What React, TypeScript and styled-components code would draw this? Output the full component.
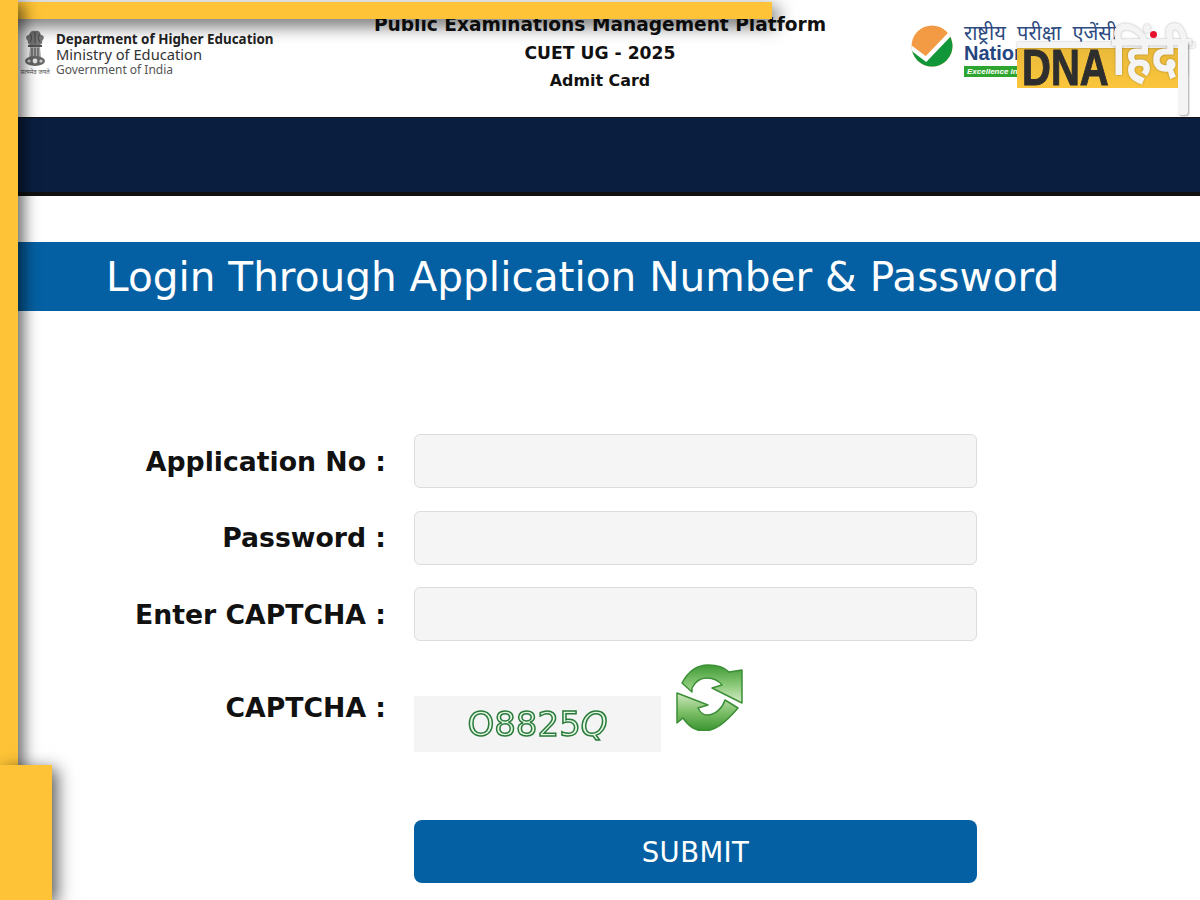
import React from 'react';
import styled, { createGlobalStyle } from 'styled-components';

const GlobalStyle = createGlobalStyle`
  html, body {
    margin: 0;
    padding: 0;
    background: #fff;
  }
  body {
    font-family: "DejaVu Sans", sans-serif;
    overflow: hidden;
  }
`;

const Page = styled.div`
  position: relative;
  width: 1200px;
  height: 900px;
  overflow: hidden;
  background: #fff;
`;

const Header = styled.header`
  display: grid;
  grid-template-columns: 1fr auto 1fr;
  height: 117px;
  color: #111;
`;

const Ministry = styled.div`
  display: flex;
  align-items: flex-start;
  gap: 6px;
  padding: 30px 0 0 20px;
`;

const EmblemBlock = styled.div`
  display: flex;
  flex-direction: column;
  align-items: center;
  width: 30px;
`;

const Motto = styled.span`
  font-family: "Noto Sans", sans-serif;
  font-size: 6px;
  line-height: 8px;
  color: #555;
  white-space: nowrap;
`;

const MinistryText = styled.div`
  display: flex;
  flex-direction: column;
  margin-top: 2px;
  font-family: "Noto Sans", "Open Sans", sans-serif;
`;

const MinistryLine = styled.span<{ $size: number; $bold?: boolean; $color: string }>`
  font-size: ${(p) => p.$size}px;
  font-weight: ${(p) => (p.$bold ? 700 : 400)};
  color: ${(p) => p.$color};
  line-height: 15px;
  white-space: nowrap;
`;

const TitleBlock = styled.div`
  display: flex;
  flex-direction: column;
  align-items: center;
  padding-top: 11px;
`;

const TitleLine = styled.div<{ $size: number }>`
  font-size: ${(p) => p.$size}px;
  font-weight: 700;
  line-height: 28px;
  white-space: nowrap;
  color: #111;
`;

const NtaBlock = styled.div`
  display: flex;
  justify-content: flex-end;
  padding-top: 25px;
`;

const NtaInner = styled.div`
  display: flex;
  gap: 11px;
  width: 289px;
  height: 60px;
`;

const NtaText = styled.div`
  display: flex;
  flex-direction: column;
`;

const NtaHindi = styled.span`
  font-family: "Noto Sans", sans-serif;
  font-size: 20px;
  line-height: 15px;
  color: #2c4a80;
  word-spacing: 6px;
  white-space: nowrap;
`;

const NtaName = styled.span`
  font-family: "Liberation Sans", sans-serif;
  font-weight: 700;
  font-size: 20px;
  line-height: 26px;
  color: #24457f;
`;

const NtaBadge = styled.span`
  font-family: "Liberation Sans", sans-serif;
  font-style: italic;
  font-weight: 700;
  font-size: 8px;
  line-height: 11px;
  height: 11px;
  width: 80px;
  padding-left: 3px;
  color: #fff;
  background: #2ea52f;
`;

const NavBar = styled.div`
  height: 74px;
  background: #0a1f40;
  border-top: 1px solid #111;
  border-bottom: 4px solid #111;
`;

const Banner = styled.h1`
  display: flex;
  align-items: center;
  height: 69px;
  margin: 46px 0 0;
  padding-left: 106px;
  background: #0560a3;
  color: #fff;
  font-size: 40.6px;
  font-weight: 400;
  white-space: nowrap;
`;

const Form = styled.form`
  display: grid;
  grid-template-columns: 386px 563px;
  column-gap: 28px;
  row-gap: 22.5px;
  padding-top: 123px;
`;

const Label = styled.label`
  justify-self: end;
  align-self: center;
  font-size: 26.7px;
  font-weight: 700;
  color: #111;
  white-space: nowrap;
`;

const Field = styled.input`
  box-sizing: border-box;
  height: 54px;
  background: #f5f5f5;
  border: 1px solid #dcdcdc;
  border-radius: 6px;
`;

const CaptchaLabel = styled(Label)`
  align-self: start;
  margin-top: 28px;
`;

const CaptchaRow = styled.div`
  display: flex;
  align-items: flex-start;
  gap: 14px;
`;

const CaptchaImage = styled.div`
  display: flex;
  align-items: center;
  justify-content: center;
  width: 247px;
  height: 56px;
  margin-top: 32px;
  background: #f4f4f4;
  font-size: 34px;
  color: #e2f7e2;
  -webkit-text-stroke: 1.5px #2a7a3b;
  filter: blur(0.5px);
`;

const CaptchaLast = styled.span`
  font-style: italic;
`;

const RefreshButton = styled.button`
  display: block;
  width: 68px;
  height: 68px;
  margin-top: -1px;
  padding: 0;
  border: none;
  background: none;
`;

const Submit = styled.button`
  grid-column: 2;
  height: 63px;
  margin-top: 46px;
  background: #0560a3;
  border: none;
  border-radius: 8px;
  color: #fff;
  font-family: "DejaVu Sans", sans-serif;
  font-size: 27.5px;
  letter-spacing: 0.4px;
`;

const FrameTop = styled.div`
  position: absolute;
  left: 0;
  top: 2px;
  width: 772px;
  height: 17px;
  background: #fec336;
  box-shadow: 5px 6px 18px rgba(0, 0, 0, 0.65);
`;

const FrameLeft = styled.div`
  position: absolute;
  left: 0;
  top: 0;
  width: 18px;
  height: 900px;
  background: #fec336;
  box-shadow: 5px 4px 16px rgba(0, 0, 0, 0.65);
`;

const FrameCorner = styled.div`
  position: absolute;
  left: 0;
  top: 765px;
  width: 52px;
  height: 135px;
  background: #fec336;
  box-shadow: 5px 4px 16px rgba(0, 0, 0, 0.65);
`;

const DnaLogo = styled.div`
  position: absolute;
  left: 1017px;
  top: 48px;
  width: 161px;
  height: 40px;
  background: linear-gradient(#e9b93a, #fbc63c);
`;

const DnaRule = styled.span`
  position: absolute;
  left: 0;
  top: -6px;
  width: 178px;
  height: 6px;
  background: #f4f4f4;
  box-shadow: 0 0 2px rgba(0, 0, 0, 0.35);
`;

const DnaWord = styled.span`
  position: absolute;
  left: 5px;
  top: -1px;
  font-family: "Liberation Sans", sans-serif;
  font-weight: 700;
  font-size: 50px;
  line-height: 42px;
  color: #2e2e2e;
  -webkit-text-stroke: 1px #2e2e2e;
  transform: scaleX(0.8);
  transform-origin: left;
`;

const DnaHindi = styled.span`
  position: absolute;
  left: 95px;
  top: -28px;
  font-family: "Noto Sans", sans-serif;
  font-weight: 700;
  font-size: 46px;
  line-height: 64px;
  color: #f4f4f4;
  text-shadow: 0 0 2px rgba(0, 0, 0, 0.35);
  white-space: nowrap;
  transform: scaleY(1.25);
  transform-origin: left center;
`;

const DnaStem = styled.span`
  position: absolute;
  left: 161px;
  top: -6px;
  width: 10px;
  height: 73px;
  border-radius: 0 0 3px 3px;
  background: #f4f4f4;
  box-shadow: 1px 1px 2px rgba(0, 0, 0, 0.35);
`;

const DnaDot = styled.span`
  position: absolute;
  left: 133px;
  top: -17px;
  width: 7px;
  height: 7px;
  border-radius: 50%;
  background: #e8112d;
`;

const Emblem = () => (
  <svg width="24" height="38" viewBox="0 0 24 38">
    <path d="M5 11C2 8 3 5 6 5C7 1 10 0 12 1C15 0 17 1 18 5C21 5 22 8 19 11C20 13 18 15 16 15H8C6 15 4 13 5 11Z" fill="#777" />
    <path d="M7 4c2 2 2 5 0 8M12 2v11M17 4c-2 2-2 5 0 8" stroke="#444" strokeWidth="1" fill="none" />
    <rect x="5" y="15" width="14" height="2" fill="#555" />
    <path d="M7 17h10l1 11H6Z" fill="#a8a8a8" />
    <path d="M9 18v10M12 18v10M15 18v10" stroke="#555" strokeWidth="1.2" />
    <ellipse cx="12" cy="31" rx="10" ry="5" fill="#666" />
    <circle cx="12" cy="31" r="2.4" fill="#e6e6e6" />
    <circle cx="6" cy="31" r="1.6" fill="#ccc" />
    <circle cx="18" cy="31" r="1.6" fill="#ccc" />
  </svg>
);

const NtaMark = () => (
  <svg width="42" height="42" viewBox="0 0 42 42">
    <defs>
      <clipPath id="ntaCircle">
        <circle cx="21" cy="21" r="20.5" />
      </clipPath>
    </defs>
    <g clipPath="url(#ntaCircle)">
      <rect width="42" height="42" fill="#f39a45" />
      <path d="M0 24L15 36L40 10H42V42H0Z" fill="#12963a" />
      <path d="M-1 22L15 34L39 9" fill="none" stroke="#fff" strokeWidth="4.5" />
    </g>
  </svg>
);

const RefreshIcon = () => (
  <svg width="68" height="68" viewBox="0 0 68 68">
    <defs>
      <linearGradient id="arrowTop" x1="0" y1="0" x2="0" y2="1">
        <stop offset="0" stopColor="#3f9a35" />
        <stop offset="0.55" stopColor="#8fcb7c" />
        <stop offset="1" stopColor="#d6ecc9" />
      </linearGradient>
      <linearGradient id="arrowBottom" x1="0" y1="0" x2="0" y2="1">
        <stop offset="0" stopColor="#cfe8c0" />
        <stop offset="0.5" stopColor="#7dbf68" />
        <stop offset="1" stopColor="#3a932f" />
      </linearGradient>
    </defs>
    <g stroke="#3c8f36" strokeWidth="1.5" strokeLinejoin="round">
      <path
        d="M7 20C14 7 24 2 33 2C42 2 49 4 54 9L67 7V40L37 25L47 22C43 17 38 15 32 15C25 15 20 19 17 25V29Z"
        fill="url(#arrowTop)"
      />
      <path
        d="M2 30V60L8 55C14 64 21 68 29 68C40 68 50 60 63 45L50 37C48 44 41 52 32 52C28 52 25 49 23 45L33 42Z"
        fill="url(#arrowBottom)"
      />
    </g>
  </svg>
);

export default function App() {
  return (
    <Page>
      <GlobalStyle />
      <Header>
        <Ministry>
          <EmblemBlock>
            <Emblem />
            <Motto>सत्यमेव जयते</Motto>
          </EmblemBlock>
          <MinistryText>
            <MinistryLine $size={13.4} $bold $color="#222">Department of Higher Education</MinistryLine>
            <MinistryLine $size={14.7} $color="#333">Ministry of Education</MinistryLine>
            <MinistryLine $size={12} $color="#555">Government of India</MinistryLine>
          </MinistryText>
        </Ministry>
        <TitleBlock>
          <TitleLine $size={18.6}>Public Examinations Management Platform</TitleLine>
          <TitleLine $size={17.2}>CUET UG - 2025</TitleLine>
          <TitleLine $size={15.9}>Admit Card</TitleLine>
        </TitleBlock>
        <NtaBlock>
          <NtaInner>
            <NtaMark />
            <NtaText>
              <NtaHindi>राष्ट्रीय परीक्षा एजेंसी</NtaHindi>
              <NtaName>National</NtaName>
              <NtaBadge>Excellence in</NtaBadge>
            </NtaText>
          </NtaInner>
        </NtaBlock>
      </Header>
      <NavBar />
      <Banner>Login Through Application Number &amp; Password</Banner>
      <Form>
        <Label>Application No :</Label>
        <Field />
        <Label>Password :</Label>
        <Field />
        <Label>Enter CAPTCHA :</Label>
        <Field />
        <CaptchaLabel>CAPTCHA :</CaptchaLabel>
        <CaptchaRow>
          <CaptchaImage>
            O8825<CaptchaLast>Q</CaptchaLast>
          </CaptchaImage>
          <RefreshButton type="button">
            <RefreshIcon />
          </RefreshButton>
        </CaptchaRow>
        <Submit type="button">SUBMIT</Submit>
      </Form>
      <FrameTop />
      <FrameLeft />
      <FrameCorner />
      <DnaLogo>
        <DnaRule />
        <DnaWord>DNA</DnaWord>
        <DnaHindi>हिंदी</DnaHindi>
        <DnaStem />
        <DnaDot />
      </DnaLogo>
    </Page>
  );
}
